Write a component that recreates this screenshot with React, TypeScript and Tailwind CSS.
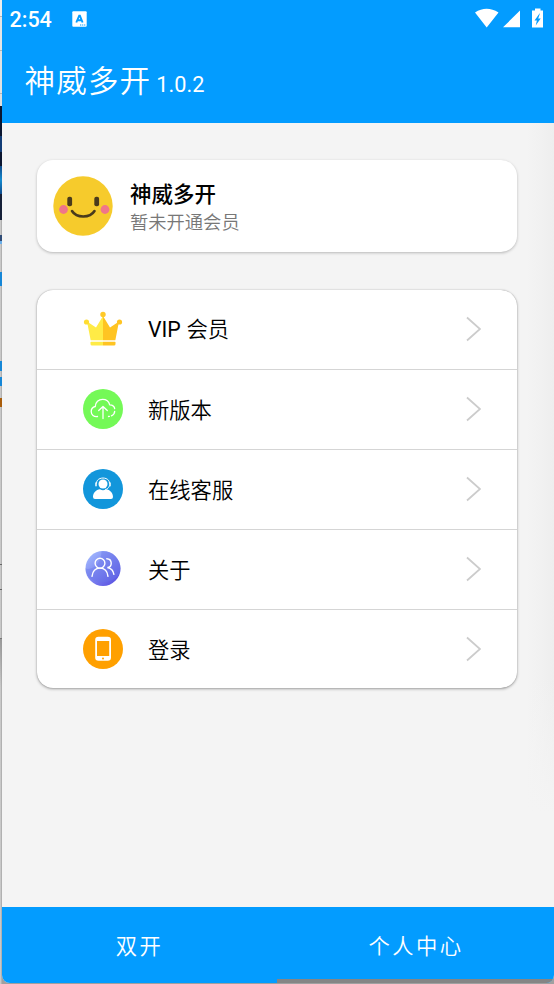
import type { ReactNode } from 'react';

const CrownIcon = () => (
  <svg className="size-10" viewBox="0 0 40 40">
    <path fill="#ffeb46" d="M20.100 6v27H8L4 12.500 13 18.500 20 7z" />
    <path fill="#ffc422" d="M20 6v27h12l4-20.500-9 6L20 7z" />
    <path fill="#ffeb46" d="M7.500 33H20v3.500H9q-1.500 0-1.500-1.500z" />
    <path fill="#ffc422" d="M20 33h12.500v2q0 1.500-1.500 1.500H20z" />
    <path stroke="#fff" strokeWidth="1.500" d="M7 32h26" />
    <circle cx="3.500" cy="13" r="2.600" fill="#ffdd33" />
    <circle cx="36.500" cy="13" r="2.600" fill="#ffc422" />
    <circle cx="20" cy="5.500" r="2.700" fill="#ffc928" />
  </svg>
);

const CloudIcon = () => (
  <svg className="size-10" viewBox="0 0 40 40" fill="none">
    <circle cx="20" cy="20" r="20" fill="#74f957" />
    <g stroke="#fff" strokeWidth="1.300" strokeLinecap="round" strokeLinejoin="round">
      <path d="M14.500 27.500C10.800 28 8.200 25.800 8.200 22.600c0-2.700 1.800-4.600 4.100-5.100.1-4.300 3.300-7.200 7.300-7.200 3.600 0 6.300 2.200 7.100 5.500 2.600.1 4.700 1.500 5 3.800" />
      <path d="M31.700 22.300c-.1 2.800-2.200 4.900-6.200 5.200" strokeDasharray="6 2" />
      <path d="M20 29.500V17.600M15.700 21.500l4.300-4 4.300 4" />
    </g>
  </svg>
);

const SupportIcon = () => (
  <svg className="size-10" viewBox="0 0 40 40" fill="none">
    <circle cx="20" cy="20" r="20" fill="#1296db" />
    <circle cx="20" cy="15" r="4.500" fill="#fff" />
    <path stroke="#fff" strokeWidth="1" d="M13.500 14.500c-.3-7.300 13.300-7.300 13 0" />
    <path stroke="#fff" strokeWidth="1.500" strokeLinecap="round" d="M13 14v2.700M27 14v2.700" />
    <path stroke="#fff" strokeWidth=".8" d="M26.500 16.500c-.5 2.300-2 3.600-4.500 4" />
    <path fill="#fff" d="M10 28c0-4.300 3.200-7.300 7-7.700q3 2 6 0c3.800.4 7 3.400 7 7.700q0 2-2 2H12q-2 0-2-2z" />
  </svg>
);

const PeopleIcon = () => (
  <svg className="size-10" viewBox="0 0 40 40" fill="none">
    <defs>
      <linearGradient id="people" x1="5" y1="4" x2="33" y2="34" gradientUnits="userSpaceOnUse">
        <stop stopColor="#a3bbff" />
        <stop offset="1" stopColor="#5b53e2" />
      </linearGradient>
    </defs>
    <circle cx="20" cy="19.500" r="17.500" fill="url(#people)" />
    <path fill="#6675e8" fillOpacity=".4" d="M2.500 19.500C10.500 22 18.500 13 18.500 2.200A17.500 17.500 0 0 1 37 24C31.500 33 19.500 35 11.500 32 5.500 29 2.500 25 2.500 19.500z" />
    <g stroke="#fff" strokeWidth="1.400" strokeLinecap="round">
      <circle cx="17" cy="14.200" r="4.900" />
      <path d="M9 27.300c.6-5.500 3.600-8.200 8-8.200s7.400 2.700 8 8.200" />
      <path d="M23.800 9.700c5.700.2 5.900 8.500.6 8.800 3.700.8 5.900 3.100 6.500 6.800" />
    </g>
  </svg>
);

const PhoneIcon = () => (
  <svg className="size-10" viewBox="0 0 40 40">
    <circle cx="20" cy="20" r="20" fill="#ffa000" />
    <rect x="12.200" y="7.800" width="15.800" height="24" rx="3.300" fill="#fff" />
    <path fill="#ffa000" d="M14 12h12.200v15H14z" />
    <circle cx="20" cy="29.400" r="1" fill="#ffa000" />
  </svg>
);

const Avatar = () => (
  <svg className="size-[60px]" viewBox="0 0 60 60" fill="none">
    <circle cx="30" cy="30" r="29.700" fill="#f6cb2c" />
    <rect x="14.300" y="20.800" width="4.800" height="9.500" rx="2" fill="#4a3b1c" />
    <rect x="41.300" y="20.800" width="4.800" height="9.500" rx="2" fill="#4a3b1c" />
    <circle cx="10.500" cy="33.500" r="4.400" fill="#f07589" />
    <circle cx="52" cy="33.500" r="4.400" fill="#f07589" />
    <path d="M19 35c4.500 7.300 18 7.300 22.500 0" stroke="#4a3b1c" strokeWidth="2.600" strokeLinecap="round" />
  </svg>
);

const menu: { label: ReactNode; key: string; icon: ReactNode }[] = [
  {
    key: 'vip',
    label: (
      <>
        <span className="mr-px font-[Roboto] font-normal">VIP</span> 会员
      </>
    ),
    icon: <CrownIcon />
  },
  { key: 'version', label: '新版本', icon: <CloudIcon /> },
  { key: 'support', label: '在线客服', icon: <SupportIcon /> },
  { key: 'about', label: '关于', icon: <PeopleIcon /> },
  { key: 'login', label: '登录', icon: <PhoneIcon /> }
];

// Sliver of the desktop behind the left edge of the window
const DesktopEdge = () => (
  <div className="flex w-0.5 shrink-0 flex-col bg-gradient-to-r from-[#d5d5d5] to-[#a5a5a5]">
    <div className="h-4 bg-[#ededed]" />
    <div className="h-px bg-[#b5b5b5]" />
    <div className="h-[33px] bg-[#e5e5e5]" />
    <div className="h-px bg-[#b5b5b5]" />
    <div className="h-[42px] bg-[#e2e2e2]" />
    <div className="h-px bg-[#b5b5b5]" />
    <div className="h-3 bg-[#dedede]" />
    <div className="h-[30px] bg-[#0b1630]" />
    <div className="h-4 bg-[#123d77]" />
    <div className="h-3.5 bg-[#0b1630]" />
    <div className="h-7 bg-gradient-to-b from-[#0f4b8c] via-[#148bd0] to-[#0f4b8c]" />
    <div className="h-[26px] bg-[#152038]" />
    <div className="h-[15px]" />
    <div className="h-1.5 bg-[#304c77]" />
    <div className="h-[3px] bg-[#69aee9]" />
    <div className="h-7" />
    <div className="h-3.5 bg-[#1687d7]" />
    <div className="h-[75px]" />
    <div className="h-2.5 bg-[#1687d7]" />
    <div className="h-1.5" />
    <div className="h-[9px] bg-[#1687d7]" />
    <div className="h-3" />
    <div className="h-[9px] bg-[#a95d0b]" />
    <div className="h-[157px]" />
    <div className="h-px bg-[#666]" />
    <div className="h-6" />
    <div className="h-px bg-[#666]" />
    <div className="h-12" />
    <div className="h-px bg-[#777]" />
    <div className="h-12 bg-gradient-to-b from-[#999] to-transparent" />
  </div>
);

const StatusBar = () => (
  <div className="flex h-[38px] items-center justify-between pt-px pr-2.5 pl-[7.500px]">
    <div className="flex items-center gap-5">
      <span className="font-[Roboto] text-[21.500px] leading-none font-medium">2:54</span>
      <svg className="-mt-0.5" width="15" height="16" viewBox="0 0 15 16" fill="none">
        <rect x=".3" y=".3" width="14.400" height="15.400" rx="1" fill="#fff" />
        <path d="M4.300 11.500 7.200 4.700h.7l2.700 6.800M5.300 9.200h4.300" stroke="#039cff" strokeWidth="1.900" />
        <path d="M8 14h1.300m.8 0h1.200m.8 0h1.200" stroke="#039cff" strokeWidth="1.200" />
      </svg>
    </div>
    <svg width="70" height="22" viewBox="0 0 70 22" className="-mt-0.5">
      <path fill="#fff" d="M1 4.500q11.500-7.500 23.500 0L12.700 19.500zM29 19.300 46 2.500v16.800zM58 2.500h3V.5h5.500v2H69v17H58z" />
      <path fill="#039cff" d="m65.500 5.500-5 7h2.400l-1.200 5 5-7h-2.500l1.700-5z" />
    </svg>
  </div>
);

export default function App() {
  return (
    <div className="flex h-[984px] w-[554px] overflow-hidden bg-[#a0a0a0] font-['Noto_Sans_CJK_SC',sans-serif]">
      <DesktopEdge />
      <div className="flex min-w-0 flex-1 flex-col pb-px">
        <div className="flex min-h-0 flex-1 flex-col overflow-hidden rounded-b-lg bg-[#f4f4f4]">
          <header className="h-[123px] shrink-0 bg-[#039cff] text-white">
            <StatusBar />
            <div className="flex items-baseline gap-[5px] pl-[22.500px]">
              <h1 className="text-[30.500px] leading-[83px] font-[350] tracking-[1.200px]">神威多开</h1>
              <span className="font-[Roboto] text-[21.700px]">1.0.2</span>
            </div>
          </header>

          <main className="flex-1 bg-[linear-gradient(to_bottom,transparent_80%,#f4f4f4),linear-gradient(to_right,transparent_525px,#eeeeee)] bg-[length:100%_690px] bg-no-repeat pt-[37px] pr-[37px] pl-[35px]">
            <section className="flex h-[92px] items-center rounded-2xl bg-white pl-4 shadow-[0_1px_3px_rgba(0,0,0,0.25)]">
              <Avatar />
              <div className="ml-[17px]">
                <h2 className="text-[21.500px] leading-[30px] font-medium text-black">神威多开</h2>
                <p className="text-[18.300px] leading-[26px] font-[350] text-[#777]">暂未开通会员</p>
              </div>
            </section>

            <section className="mt-[38px] h-[398px] overflow-hidden rounded-2xl bg-white shadow-[0_0_1px_rgba(0,0,0,0.3),0_1px_3px_rgba(0,0,0,0.35)]">
              {menu.map(({ key, label, icon }) => (
                <div
                  key={key}
                  className="flex h-20 items-center border-b border-[#d5d5d5] pr-9 pb-px pl-[46px] last:border-transparent"
                >
                  {icon}
                  <span className="ml-[25px] text-[21.300px] leading-8 font-[350] text-black">{label}</span>
                  <svg className="ml-auto" width="15" height="26" viewBox="0 0 15 26" fill="none">
                    <path d="m1 1.500 13 11.500L1 24.500" stroke="#ccc" strokeWidth="1.800" />
                  </svg>
                </div>
              ))}
            </section>
          </main>

          <nav className="relative grid h-[76px] shrink-0 grid-cols-2 bg-[#039cff] text-[21.300px] font-[350] tracking-[2.500px] text-white">
            <button className="pr-px">双开</button>
            <button>个人中心</button>
            <span className="absolute right-0 bottom-0 h-1 w-[277px] rounded-br-lg bg-[#858585]" />
          </nav>
        </div>
      </div>
    </div>
  );
}
